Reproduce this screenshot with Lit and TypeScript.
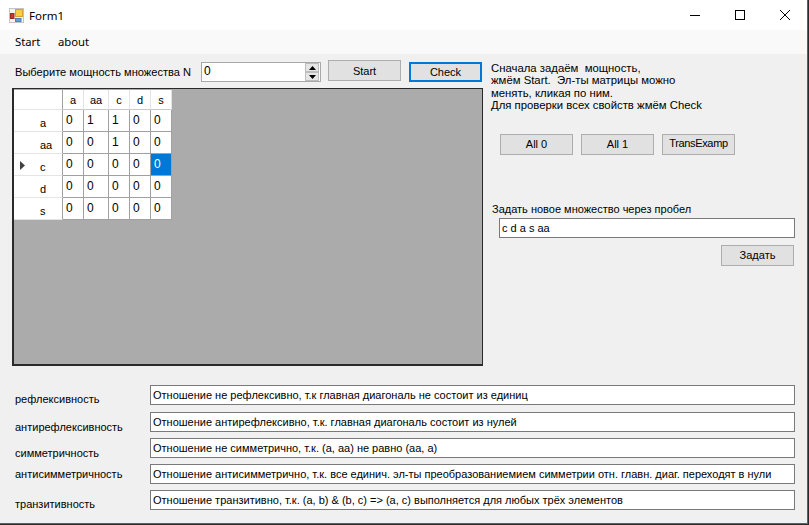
import { LitElement, html, css } from 'lit';
import { customElement } from 'lit/decorators.js';

const COLUMNS = ['a', 'aa', 'c', 'd', 's'];
const MATRIX = [
  [0, 1, 1, 0, 0],
  [0, 0, 1, 0, 0],
  [0, 0, 0, 0, 0],
  [0, 0, 0, 0, 0],
  [0, 0, 0, 0, 0],
];
const CURRENT_ROW = 2;
const CURRENT_COL = 4;

const PROPERTIES = [
  ['рефлексивность', 'Отношение не рефлексивно, т.к главная диагональ не состоит из единиц'],
  ['антирефлексивность', 'Отношение антирефлексивно, т.к. главная диагональ состоит из нулей'],
  ['симметричность', 'Отношение не симметрично, т.к. (a, aa) не равно (aa, a)'],
  ['антисимметричность', 'Отношение антисимметрично, т.к. все единич. эл-ты преобразованиемием симметрии отн. главн. диаг. переходят в нули'],
  ['транзитивность', 'Отношение транзитивно, т.к. (a, b) & (b, c) => (a, c) выполняется для любых трёх элементов'],
];

@customElement('app-root')
export class AppRoot extends LitElement {
  static styles = css`
    :host {
      display: block;
      width: 809px;
      height: 525px;
      overflow: hidden;
      background: #2b2b2b;
      font-family: 'Liberation Sans', Arial, sans-serif;
      font-size: 11px;
      color: #000;
    }

    .window {
      box-sizing: border-box;
      width: 808px;
      height: 524px;
      display: flex;
      flex-direction: column;
      background: #f0f0f0;
      border-right: 1px solid #0078d7;
      border-bottom: 1px solid #0078d7;
    }

    .titlebar {
      height: 30px;
      flex: none;
      display: flex;
      align-items: center;
      background: #fff;
      font-family: 'Noto Sans', sans-serif;
    }

    .app-icon {
      margin-left: 9px;
      width: 15px;
      height: 15px;
    }

    .title {
      margin-left: 5px;
      flex: 1;
      font-size: 11.5px;
    }

    .caption-btn {
      width: 45px;
      height: 30px;
      display: flex;
      align-items: center;
      justify-content: center;
    }

    .menubar {
      height: 24px;
      flex: none;
      display: flex;
      align-items: center;
      box-sizing: border-box;
      gap: 17.5px;
      padding: 0 0 2px 15px;
      background: #f9f9f9;
      font-family: 'Noto Sans', sans-serif;
      font-size: 11.3px;
    }

    .top {
      display: flex;
      height: 312px;
      flex: none;
      padding: 6px 0 0 12px;
      box-sizing: border-box;
    }

    .left {
      width: 471px;
      flex: none;
    }

    .toolbar {
      display: flex;
      height: 28px;
      align-items: flex-start;
    }

    .toolbar label {
      width: 189px;
      padding: 6px 0 0 3px;
      box-sizing: border-box;
      white-space: nowrap;
      font-size: 11.1px;
    }

    .spinner {
      box-sizing: border-box;
      width: 120px;
      height: 20px;
      margin-top: 2px;
      display: flex;
      justify-content: space-between;
      background: #fff;
      border: 1px solid #a9a9a9;
      padding-left: 2px;
      line-height: 16px;
      font-size: 12px;
    }

    .spin-buttons {
      width: 14px;
      margin-right: 1px;
      display: flex;
      flex-direction: column;
    }

    .spin-buttons span {
      flex: 1;
      display: flex;
      align-items: center;
      justify-content: center;
      background: #e6e6e6;
      border: 1px solid #bdbdbd;
    }

    button {
      box-sizing: border-box;
      width: 73px;
      height: 21px;
      padding: 0;
      flex: none;
      font: inherit;
      color: inherit;
      background: #e1e1e1;
      border: 1px solid #adadad;
    }

    button.tight {
      letter-spacing: -0.35px;
      padding-bottom: 2px;
    }

    .btn-start {
      margin-left: 7px;
    }

    .btn-check {
      margin: 2px 0 0 8px;
      height: 20px;
      border: 2px solid #0078d7;
    }

    .grid-view {
      box-sizing: border-box;
      height: 278px;
      padding: 1px 0 0;
      background: #ababab;
      border-style: solid;
      border-color: #2a2a2a;
      border-width: 1px 1px 2px 2px;
    }

    .cells {
      display: grid;
      grid-template-columns: 49px 21px 25px 21px 21px 21px;
      grid-template-rows: 20px repeat(5, 22px);
      width: 158px;
    }

    .cell {
      box-sizing: border-box;
      background: #fff;
      border-right: 1px solid #a0a0a0;
      border-bottom: 1px solid #a0a0a0;
      padding: 3px 0 0 3px;
      line-height: 14px;
      font-size: 12px;
    }

    .cell.selected {
      background: #0078d7;
      color: #fff;
    }

    .col-head {
      text-align: center;
      padding: 3px 0 0;
      font-size: 11px;
      border-right-color: #e4e4e4;
      border-bottom-color: #c8c8c8;
    }

    .corner {
      background: #fff;
      border-right: 1px solid #a0a0a0;
      border-bottom: 1px solid #e4e4e4;
    }

    .row-head {
      box-sizing: border-box;
      display: flex;
      background: #fff;
      border-right: 1px solid #a0a0a0;
      border-bottom: 1px solid #e4e4e4;
      line-height: 14px;
      padding-top: 6px;
    }

    .row-head .marker {
      width: 26px;
      flex: none;
      padding-left: 6px;
      box-sizing: border-box;
      margin-top: -1px;
    }

    .right {
      flex: 1;
      padding-left: 8px;
      min-width: 0;
    }

    .help {
      margin: 2px 0 0;
      line-height: 12.4px;
      white-space: pre;
      font-size: 11.35px;
    }

    .fill-buttons {
      display: flex;
      gap: 8px;
      margin: 22px 0 0 9px;
    }

    .new-set {
      margin: 47px 0 0 1px;
      line-height: 14px;
    }

    .field {
      box-sizing: border-box;
      height: 20px;
      background: #fff;
      border: 1px solid #7a7a7a;
      padding-left: 2px;
      line-height: 18px;
      white-space: nowrap;
    }

    .new-set .field {
      width: 296px;
      margin: 2px 0 0 7px;
    }

    .btn-row {
      display: flex;
      justify-content: flex-end;
      width: 302px;
      margin: 7px 0 0;
    }

    .props {
      padding: 19px 0 0 15px;
      display: flex;
      flex-direction: column;
    }

    .prop {
      display: flex;
      height: 20px;
      margin-bottom: 6px;
    }

    .prop:first-child {
      margin-bottom: 7px;
    }

    .prop span {
      width: 135px;
      flex: none;
      line-height: 14px;
      padding-top: 7px;
      box-sizing: content-box;
      height: 12px;
    }

    .prop:nth-child(2) span {
      padding-top: 8px;
    }

    .prop:nth-child(3) span {
      padding-top: 8px;
    }

    .prop:nth-child(4) span {
      padding-top: 3px;
    }

    .prop:nth-child(5) span {
      padding-top: 7px;
    }

    .prop .field {
      width: 645px;
    }
  `;

  render() {
    return html`
      <div class="window">
        <div class="titlebar">
          <svg class="app-icon" viewBox="0 0 15 15">
            <rect x="0.5" y="0.5" width="14" height="14" fill="#f4f4f4" stroke="#c4c4c4"/>
            <rect x="6.5" y="1.5" width="7" height="7" fill="#f6cf45" stroke="#dca032"/>
            <rect x="1.5" y="5.5" width="3.5" height="5" fill="#c8352a" stroke="#a02a20"/>
            <rect x="6.5" y="10.5" width="5.5" height="3" fill="#6c9ce0" stroke="#5080c4"/>
          </svg>
          <div class="title">Form1</div>
          <div class="caption-btn">
            <svg width="10" height="10" viewBox="0 0 10 10"><path d="M0 5.5H10" stroke="#000"/></svg>
          </div>
          <div class="caption-btn">
            <svg width="10" height="10" viewBox="0 0 10 10"><rect x="0.5" y="0.5" width="9" height="9" fill="none" stroke="#000"/></svg>
          </div>
          <div class="caption-btn">
            <svg width="10" height="10" viewBox="0 0 10 10"><path d="M0 0L10 10M10 0L0 10" stroke="#000" fill="none"/></svg>
          </div>
        </div>

        <div class="menubar"><span>Start</span><span>about</span></div>

        <div class="top">
          <div class="left">
            <div class="toolbar">
              <label>Выберите мощность множества N</label>
              <div class="spinner">
                <span>0</span>
                <div class="spin-buttons">
                  <span><svg width="7" height="4" viewBox="0 0 7 4"><path d="M3.5 0L7 4H0Z" fill="#000"/></svg></span>
                  <span><svg width="7" height="4" viewBox="0 0 7 4"><path d="M0 0H7L3.5 4Z" fill="#000"/></svg></span>
                </div>
              </div>
              <button class="btn-start">Start</button>
              <button class="btn-check">Check</button>
            </div>
            <div class="grid-view">
              <div class="cells">
                <div class="corner"></div>
                ${COLUMNS.map((c) => html`<div class="cell col-head">${c}</div>`)}
                ${MATRIX.map(
                  (row, r) => html`
                    <div class="row-head">
                      <div class="marker">
                        ${r === CURRENT_ROW
                          ? html`<svg width="5" height="9" viewBox="0 0 5 9"><path d="M0 0L5 4.5L0 9Z" fill="#404040"/></svg>`
                          : ''}
                      </div>
                      <span>${COLUMNS[r]}</span>
                    </div>
                    ${row.map(
                      (v, c) => html`<div class="cell ${r === CURRENT_ROW && c === CURRENT_COL ? 'selected' : ''}">${v}</div>`
                    )}
                  `
                )}
              </div>
            </div>
          </div>

          <div class="right">
            <p class="help">Сначала задаём  мощность,
жмём Start.  Эл-ты матрицы можно
менять, кликая по ним.
Для проверки всех свойств жмём Check</p>
            <div class="fill-buttons">
              <button>All 0</button>
              <button>All 1</button>
              <button class="tight">TransExamp</button>
            </div>
            <div class="new-set">
              <div>Задать новое множество через пробел</div>
              <div class="field">c d a s aa</div>
              <div class="btn-row"><button>Задать</button></div>
            </div>
          </div>
        </div>

        <div class="props">
          ${PROPERTIES.map(
            ([name, text]) => html`
              <div class="prop">
                <span>${name}</span>
                <div class="field">${text}</div>
              </div>
            `
          )}
        </div>
      </div>
    `;
  }
}
